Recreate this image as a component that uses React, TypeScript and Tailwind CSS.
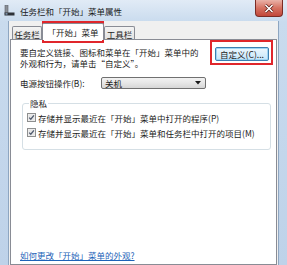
import React from 'react';

const TaskbarIcon = () => (
  <svg width="11" height="11" viewBox="0 0 11 11">
    <rect x="1" y="0.5" width="3" height="8" fill="#8a8f96" stroke="#5a5f66" strokeWidth="0.6" />
    <rect x="0.5" y="7.5" width="10" height="3" fill="#2e3238" />
    <rect x="1.5" y="8.3" width="2" height="1.2" fill="#9ab8d8" />
  </svg>
);

const Check = () => (
  <svg width="9" height="9" viewBox="0 0 9 9" className="shrink-0">
    <rect x="0.5" y="0.5" width="8" height="8" fill="#f3f3f3" stroke="#8e8f8f" />
    <rect x="1.5" y="1.5" width="6" height="6" fill="#e6e6e6" />
    <path d="M2.2 4.6 L3.8 6.2 L6.9 2.4" fill="none" stroke="#4f5a6e" strokeWidth="1.3" />
  </svg>
);

export default function App() {
  return (
    <div className="relative flex h-[265px] w-[287px] flex-col overflow-hidden bg-[linear-gradient(to_bottom,#e1ebf6,#c9dbee_22px,#bed2e9)] font-['Noto_Sans_CJK_SC',sans-serif] text-[8.5px] leading-[10px] text-[#1c1c1c]">
      {/* title bar */}
      <div className="flex h-[21px] shrink-0 items-start">
        <div className="mt-[5px] ml-[4px]">
          <TaskbarIcon />
        </div>
        <span className="mt-[6px] ml-[5px] text-[8.5px] leading-[10px] text-[#1a1a1a]">任务栏和「开始」菜单属性</span>
        <div className="mr-[4px] ml-auto flex h-[17px] w-[28px] items-center justify-center rounded-b-[4px] border border-t-0 border-[#7b2c25] bg-[linear-gradient(to_bottom,#eab2a8,#d67262_50%,#c2473a)]">
          <svg width="10" height="9" viewBox="0 0 10 9">
            <path d="M1.5 1 L8.5 8 M8.5 1 L1.5 8" stroke="#5a1a14" strokeWidth="3" />
            <path d="M1.5 1 L8.5 8 M8.5 1 L1.5 8" stroke="#ffffff" strokeWidth="1.6" />
          </svg>
        </div>
      </div>

      {/* dialog body */}
      <div className="mx-[8px] flex flex-1 flex-col border-x border-[#8ea6c1] bg-[#f0f0f0] pr-[1px] pl-[1px]">
        {/* tabs */}
        <div className="flex h-[18px] shrink-0 items-end pl-[2px]">
          <div className="flex h-[13px] w-[30px] items-center justify-center rounded-t-[2px] border border-b-0 border-[#898c95] bg-[linear-gradient(to_bottom,#f4f4f4,#e2e2e2)] pt-[1px]">
            任务栏
          </div>
          <div className="relative z-10 -mb-px flex h-[17px] w-[62px] items-center justify-center rounded-t-[2px] border border-b-0 border-[#898c95] bg-white pb-[1px]">
            「开始」菜单
          </div>
          <div className="flex h-[13px] w-[31px] items-center justify-center rounded-t-[2px] border border-b-0 border-[#898c95] bg-[linear-gradient(to_bottom,#f4f4f4,#e2e2e2)] pt-[1px]">
            工具栏
          </div>
        </div>

        {/* panel */}
        <div className="flex flex-1 flex-col border border-[#898c95] bg-white pt-[7px] pr-[7px] pl-[9px]">
          <div className="flex items-start justify-between">
            <p className="w-[185px] leading-[11px]">
              要自定义链接、图标和菜单在「开始」菜单中的
              <br />
              外观和行为，请单击“自定义”。
            </p>
            <div className="flex h-[14px] w-[54px] items-center justify-center rounded-[2px] border border-[#3c7fb1] bg-[linear-gradient(to_bottom,#eef7fd,#d9effc_50%,#c4e5fa)] shadow-[inset_0_0_0_1px_#9fd5f5]">
              自定义(C)...
            </div>
          </div>

          <div className="mt-[8px] flex items-center">
            <span className="w-[81px]">电源按钮操作(B):</span>
            <div className="flex h-[12px] w-[105px] items-center justify-between rounded-[2px] border border-[#707070] bg-[linear-gradient(to_bottom,#f2f2f2,#e6e6e6_50%,#d6d6d6)] pr-[4px] pl-[3px]">
              <span>关机</span>
              <svg width="6" height="4" viewBox="0 0 6 4">
                <path d="M0 0 L6 0 L3 3.5 Z" fill="#1a1a1a" />
              </svg>
            </div>
          </div>

          <fieldset className="mt-[9px] ml-[2px] w-[249px] rounded-[3px] border border-[#d5dfe5] pb-[9px] pl-[4px]">
            <legend className="ml-[2px] px-[1px]">隐私</legend>
            <div className="mt-[2px] flex h-[15px] items-center gap-[2px]">
              <Check />
              <span>存储并显示最近在「开始」菜单中打开的程序(P)</span>
            </div>
            <div className="flex h-[15px] items-center gap-[2px]">
              <Check />
              <span>存储并显示最近在「开始」菜单和任务栏中打开的项目(M)</span>
            </div>
          </fieldset>

          <a className="mt-[100px] w-fit text-[#1d63b8] underline">如何更改「开始」菜单的外观?</a>
        </div>
      </div>

      {/* red highlight boxes */}
      <div className="pointer-events-none absolute top-[21px] left-[42px] h-[22px] w-[62px] border-2 border-[#e0262b]" />
      <div className="pointer-events-none absolute top-[40px] left-[210px] h-[25px] w-[63px] border-2 border-[#e0262b]" />
    </div>
  );
}
